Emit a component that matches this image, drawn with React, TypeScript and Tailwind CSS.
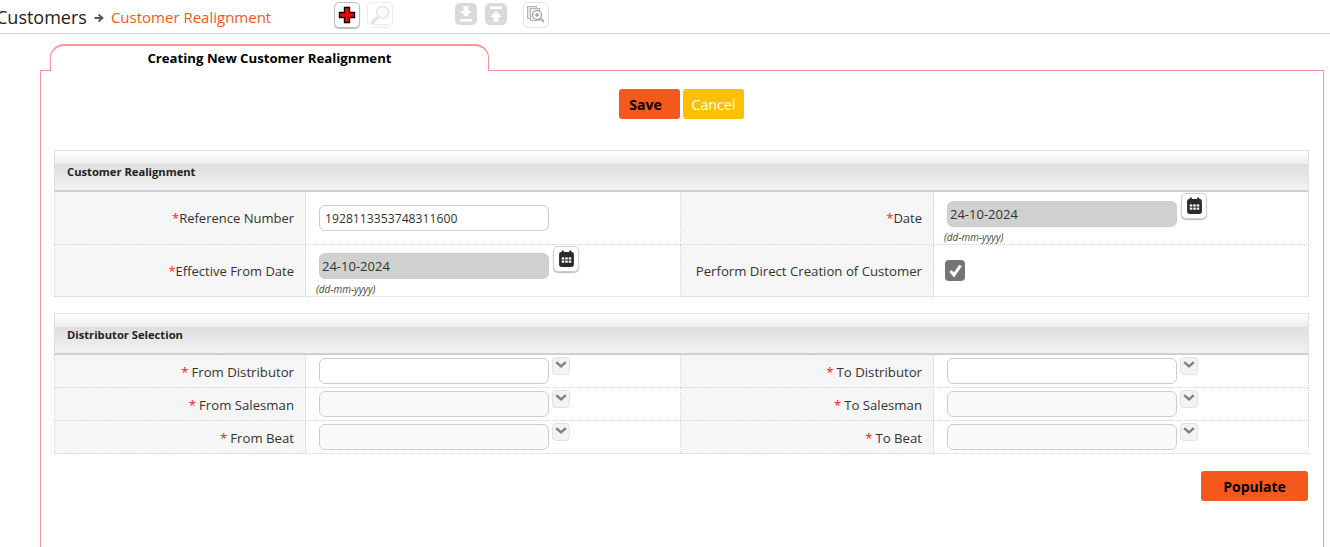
import React from "react";

const F = "[font-family:'Open_Sans','Noto_Sans',sans-serif]";

function Cal() {
  return (
    <svg width="17" height="18" viewBox="0 0 16 17">
      <rect x="1" y="2" width="14" height="14" rx="2" fill="#2b2b2b" />
      <rect x="3.5" y="0.5" width="2" height="3" fill="#2b2b2b" />
      <rect x="10.5" y="0.5" width="2" height="3" fill="#2b2b2b" />
      <g fill="#fff">
        <rect x="3.5" y="7" width="2.4" height="2" /><rect x="6.8" y="7" width="2.4" height="2" /><rect x="10.1" y="7" width="2.4" height="2" />
        <rect x="3.5" y="10" width="2.4" height="2" /><rect x="6.8" y="10" width="2.4" height="2" /><rect x="10.1" y="10" width="2.4" height="2" />
      </g>
    </svg>
  );
}

function CalBtn({ className }: { className: string }) {
  return (
    <div className={`w-[26px] h-[26px] rounded-[5px] border border-[#cfcfcf] bg-white flex items-center justify-center shadow-[0_1px_1px_#bbb] ${className}`}>
      <Cal />
    </div>
  );
}

function Chevron() {
  return (
    <div className="ml-[3px] -mt-[1px] w-[18px] h-[18px] rounded-[4px] border border-[#e2e2e2] bg-[#f3f3f3] flex items-start justify-center pt-[3px]">
      <svg width="12" height="8" viewBox="0 0 12 8"><path d="M1.2 1.2 L6 5.5 L10.8 1.2" fill="none" stroke="#808080" strokeWidth="2.4" /></svg>
    </div>
  );
}

const stripes = "bg-[repeating-linear-gradient(135deg,#f5f5f5_0,#f5f5f5_2px,#f6f6f6_2px,#f6f6f6_4px)]";

function Label({ children, h, pt, size }: { children: React.ReactNode; h: string; pt: string; size?: string }) {
  return (
    <div className={`${h} ${pt} ${stripes} ${size ?? "text-[13.2px]"} border-b border-r border-dotted border-[#d2d2d2] flex items-center justify-end pr-[11px] text-[#333] whitespace-nowrap`}>
      {children}
    </div>
  );
}

function Value({ children, h }: { children: React.ReactNode; h: string }) {
  return (
    <div className={`${h} bg-white border-b border-r border-dotted border-[#d2d2d2] relative pl-[13px]`}>
      {children}
    </div>
  );
}

function Star({ spaced }: { spaced?: boolean }) {
  return <span className={`text-[#ff2020] ${spaced ? "mr-[3px]" : ""}`}>*</span>;
}

function Header({ title }: { title: string }) {
  return (
    <div className="h-[42px] border border-[#dfdfdf] border-b-2 border-b-[#cfcfcf] bg-[linear-gradient(to_bottom,#ffffff_0,#ececec_13px,#dedede_13px,#f2f2f2_100%)] pl-[12px] pt-[13px] text-[11.2px] leading-[16px] font-bold text-[#222]">
      {title}
    </div>
  );
}

const inputCls = "block w-[230px] h-[26px] rounded-[6px] border border-[#cccccc] text-[#333]";

function Pick({ disabled, top }: { disabled?: boolean; top: string }) {
  return (
    <div className={`flex items-start ${top}`}>
      <div className={`${inputCls} ${disabled ? "bg-[#fafafa]" : "bg-white"}`} />
      <Chevron />
    </div>
  );
}

function DateField({ top }: { top: string }) {
  return (
    <div className={`flex items-start ${top}`}>
      <div className="flex flex-col">
        <div className={`${inputCls} bg-[#d0d0d0] px-[2px] text-[13px] leading-[25px] text-[#333]`}>24-10-2024</div>
        <div className="-ml-[3px] mt-[3px] text-[10px] leading-[14px] italic text-[#444]">(dd-mm-yyyy)</div>
      </div>
    </div>
  );
}

function ToolBtn({ children, className }: { children: React.ReactNode; className: string }) {
  return <div className={`rounded-[5px] flex items-center justify-center ${className}`}>{children}</div>;
}

export default function App() {
  return (
    <div className={`${F} w-[1330px] h-[547px] overflow-hidden bg-white relative`}>
      {/* top bar */}
      <div className="h-[34px] border-b border-[#cccccc] flex items-start">
        <div className="w-[338px] shrink-0 flex items-center h-[33px] -ml-[4px] pt-[2px] whitespace-nowrap">
          <span className="text-[18px] text-[#222]">Customers</span>
          <svg className="ml-[7px] mr-[7px]" width="10" height="10" viewBox="0 0 10 10"><path d="M0.5 5 H7 M4.5 1.5 L8.5 5 L4.5 8.5" fill="none" stroke="#555" strokeWidth="1.8" /></svg>
          <span className="text-[15px] text-[#f4581a]">Customer Realignment</span>
        </div>
        <div className="flex items-start pt-[2px]">
          <ToolBtn className="w-[26px] h-[26px] border border-[#bdbdbd] bg-white shadow-[0_1px_1px_#bbb]">
            <svg width="18" height="18" viewBox="0 0 18 18"><path d="M6.5 1.5 H11.5 V6.5 H16.5 V11.5 H11.5 V16.5 H6.5 V11.5 H1.5 V6.5 H6.5 Z" fill="#f00" stroke="#000" strokeWidth="1.4" /></svg>
          </ToolBtn>
          <ToolBtn className="ml-[7px] w-[26px] h-[26px] border border-[#ececec] bg-white">
            <svg width="24" height="24" viewBox="0 0 22 22">
              <circle cx="13.5" cy="8.5" r="5.5" fill="#fbfbfb" stroke="#e6e6e6" strokeWidth="1.6" />
              <path d="M9.5 12.5 L3 19" stroke="#e2e2e2" strokeWidth="3" />
              <path d="M5 20 H19" stroke="#efefef" strokeWidth="1.5" />
            </svg>
          </ToolBtn>
          <ToolBtn className="ml-[62px] w-[22px] h-[22px] mt-[1px] bg-[#d9d9d9]">
            <svg width="16" height="18" viewBox="0 0 16 18"><path d="M5.5 1 H10.5 V6 H14 L8 12 L2 6 H5.5 Z" fill="#fff" /><rect x="2" y="14" width="12" height="2.5" fill="#fff" /></svg>
          </ToolBtn>
          <ToolBtn className="ml-[8px] w-[22px] h-[22px] mt-[1px] bg-[#d9d9d9]">
            <svg width="16" height="18" viewBox="0 0 16 18"><rect x="2" y="1.5" width="12" height="2.5" fill="#fff" /><path d="M5.5 17 H10.5 V12 H14 L8 6 L2 12 H5.5 Z" fill="#fff" /></svg>
          </ToolBtn>
          <ToolBtn className="ml-[16px] w-[26px] h-[26px] border border-[#e2e2e2] bg-white">
            <svg width="20" height="20" viewBox="0 0 20 20">
              <rect x="1.5" y="1.5" width="9" height="12" fill="#e8e8e8" stroke="#b5b5b5" />
              <rect x="4.5" y="3.5" width="9" height="12" fill="#f2f2f2" stroke="#b5b5b5" />
              <circle cx="11" cy="10" r="4.5" fill="#f8f8f8" stroke="#9a9a9a" strokeWidth="1.2" />
              <path d="M9 10 H13 M11 8 V12" stroke="#888" />
              <path d="M14.5 13.5 L18 17" stroke="#aaa" strokeWidth="2" />
            </svg>
          </ToolBtn>
        </div>
      </div>

      {/* tab and panel */}
      <div className="ml-[40px] w-[1284px] pt-[10px]">
        <div className="relative z-10 ml-[10px] w-[439px] h-[27px] rounded-t-[14px] border border-b-0 border-[#ff9199] border-t-2 bg-white text-center text-[13.2px] leading-[25px] font-bold text-black">
          Creating New Customer Realignment
        </div>
        <div className="-mt-px h-[480px] border border-b-0 border-[#ff9199] pl-[13px] pr-[14px]">
          <div className="flex justify-center gap-[3px] pt-[18px]">
            <div className="w-[61px] h-[30px] rounded-[3px] bg-[#f4581a] text-center text-[14px] leading-[31px] font-bold text-black pr-[8px]">Save</div>
            <div className="w-[61px] h-[30px] rounded-[3px] bg-[#ffc000] text-center text-[14.3px] leading-[31px] text-white">Cancel</div>
          </div>

          <div className="mt-[31px]">
            <Header title="Customer Realignment" />
            <div className="grid grid-cols-[251px_375px_253px_1fr] border-l border-dotted border-[#d2d2d2]">
              <Label h="h-[53px]" pt="pt-[2px]" size="text-[13px]"><span><Star />Reference Number</span></Label>
              <Value h="h-[53px]">
                <div className="pt-[13px]">
                  <div className={`${inputCls} bg-white px-[5px] text-[12.2px] leading-[25px]`}>1928113353748311600</div>
                </div>
              </Value>
              <Label h="h-[53px]" pt="pt-[2px]" size="text-[13px]"><Star />Date</Label>
              <Value h="h-[53px]">
                <DateField top="pt-[9px]" />
                <CalBtn className="absolute left-[247px] top-[1px]" />
              </Value>

              <Label h="h-[52px]" pt="pt-[2px]" size="text-[13px]"><Star />Effective From Date</Label>
              <Value h="h-[52px]">
                <DateField top="pt-[8px]" />
                <CalBtn className="absolute left-[247px] top-[1px]" />
              </Value>
              <Label h="h-[52px]" pt="pt-[2px]">Perform Direct Creation of Customer</Label>
              <Value h="h-[52px]">
                <div className="pt-[15px]">
                  <div className="-ml-[2px] w-[20px] h-[21px] rounded-[4px] bg-[#757575] flex items-center justify-center">
                    <svg width="15" height="15" viewBox="0 0 15 15"><path d="M2.5 8 L6 12 L12.5 2.5" fill="none" stroke="#fff" strokeWidth="3" /></svg>
                  </div>
                </div>
              </Value>
            </div>
          </div>

          <div className="mt-[16px]">
            <Header title="Distributor Selection" />
            <div className="grid grid-cols-[251px_375px_253px_1fr] border-l border-dotted border-[#d2d2d2]">
              <Label h="h-[33px]" pt="pt-[3px]"><Star spaced />From Distributor</Label>
              <Value h="h-[33px]"><Pick top="pt-[3px]" /></Value>
              <Label h="h-[33px]" pt="pt-[3px]"><Star spaced />To Distributor</Label>
              <Value h="h-[33px]"><Pick top="pt-[3px]" /></Value>

              <Label h="h-[33px]" pt="pt-[4px]"><Star spaced />From Salesman</Label>
              <Value h="h-[33px]"><Pick disabled top="pt-[3px]" /></Value>
              <Label h="h-[33px]" pt="pt-[4px]"><Star spaced />To Salesman</Label>
              <Value h="h-[33px]"><Pick disabled top="pt-[3px]" /></Value>

              <Label h="h-[33px]" pt="pt-[4px]"><Star spaced />From Beat</Label>
              <Value h="h-[33px]"><Pick disabled top="pt-[3px]" /></Value>
              <Label h="h-[33px]" pt="pt-[4px]"><Star spaced />To Beat</Label>
              <Value h="h-[33px]"><Pick disabled top="pt-[3px]" /></Value>
            </div>
          </div>

          <div className="flex justify-end mt-[17px] pr-[1px]">
            <div className="w-[107px] h-[30px] rounded-[3px] bg-[#f4581a] text-center text-[14px] leading-[31px] font-bold text-black">Populate</div>
          </div>
        </div>
      </div>
    </div>
  );
}
